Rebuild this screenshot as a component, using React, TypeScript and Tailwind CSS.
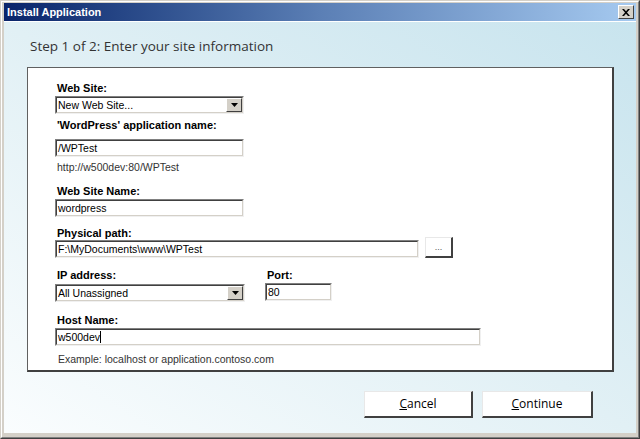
const ui = '"Liberation Sans", Arial, sans-serif';

function Sunken({ className, children }: { className: string; children?: React.ReactNode }) {
  return (
    <div className={`border border-t-[#808080] border-l-[#808080] border-r-[#f0f0f0] border-b-[#f0f0f0] ${className}`}>
      <div className="h-full flex items-center border border-t-[#404040] border-l-[#404040] border-r-[#d4d0c8] border-b-[#d4d0c8] bg-white">
        {children}
      </div>
    </div>
  );
}

function TextBox({ value, className, caret }: { value: string; className: string; caret?: boolean }) {
  return (
    <Sunken className={`h-[18px] ${className}`}>
      <span className="pl-[1px] text-[10.5px] leading-none text-black">{value}</span>
      {caret && <span className="w-px h-[12px] bg-black" />}
    </Sunken>
  );
}

function Combo({ value, className }: { value: string; className: string }) {
  return (
    <Sunken className={`h-[18px] ${className}`}>
      <span className="flex-1 pl-[1px] text-[10.5px] leading-none text-black">{value}</span>
      <div className="w-[16px] h-full flex items-center justify-center bg-[#d4d0c8] border border-t-white border-l-white border-r-[#404040] border-b-[#404040]">
        <svg width="7" height="4" viewBox="0 0 7 4">
          <path d="M0 0h7L3.5 4z" fill="#000" />
        </svg>
      </div>
    </Sunken>
  );
}

function Label({ text, className }: { text: string; className: string }) {
  return <div className={`ml-[2px] text-[11px] leading-[14px] font-bold text-black ${className}`}>{text}</div>;
}

function DlgButton({ label, className }: { label: string; className: string }) {
  return (
    <button
      className={`h-[27px] bg-white border border-t-[#e8e8e8] border-l-[#e8e8e8] border-r-2 border-b-2 border-r-[#404040] border-b-[#404040] text-[12px] text-black ${className}`}
      style={{ fontFamily: '"Open Sans", sans-serif' }}
    >
      <span className="underline">{label[0]}</span>
      {label.slice(1)}
    </button>
  );
}

export default function App() {
  return (
    <div className="w-[640px] h-[439px] bg-[#d4d0c8] border border-t-[#d4d0c8] border-l-[#d4d0c8] border-r-[#404040] border-b-[#404040]" style={{ fontFamily: ui }}>
      <div className="h-full flex flex-col border border-t-white border-l-white border-r-[#808080] border-b-[#808080] px-[2px] pt-[1px] pb-[4px]">
        <div className="h-[18px] flex items-center justify-between bg-linear-to-r from-[#0a246a] via-[#5b7fb5] to-[#a6caf0] pl-[3px] pr-[2px]">
          <span className="text-[11px] font-bold text-white">Install Application</span>
          <div className="w-[16px] h-[14px] flex items-center justify-center bg-[#d4d0c8] border border-t-white border-l-white border-r-[#404040] border-b-[#404040]">
            <svg width="8" height="7" viewBox="0 0 8 7">
              <path d="M0 0h2l2 2.3L6 0h2L5 3.5 8 7H6L4 4.7 2 7H0l3-3.5z" fill="#000" />
            </svg>
          </div>
        </div>
        <div className="flex-1 flex flex-col bg-linear-to-bl from-[#c8e4ee] via-[#e1f0f5] to-[#fafdfe] border-t border-[#ffffff]">
          <div
            className="ml-[26px] mt-[14px] text-[13.5px] leading-[20px] text-[#333]"
            style={{ fontFamily: '"Open Sans", sans-serif' }}
          >
            Step 1 of 2: Enter your site information
          </div>
          <div className="ml-[23px] mt-[11px] w-[587px] h-[305px] bg-white border border-[#606060] border-r-2 border-b-2 border-r-[#404040] border-b-[#404040] pl-[27px] pt-[13px] flex flex-col">
            <Label text="Web Site:" className="" />
            <Combo value="New Web Site..." className="mt-[1px] w-[189px]" />
            <Label text="'WordPress' application name:" className="mt-[4px]" />
            <TextBox value="/WPTest" className="mt-[7px] w-[189px]" />
            <div className="ml-[2px] mt-[3px] text-[10.5px] leading-[14px] text-[#333]">http://w500dev:80/WPTest</div>
            <Label text="Web Site Name:" className="mt-[10px]" />
            <TextBox value="wordpress" className="mt-[1px] w-[189px]" />
            <Label text="Physical path:" className="mt-[9px]" />
            <div className="flex items-start gap-[6px]">
              <TextBox value="F:\MyDocuments\www\WPTest" className="w-[364px]" />
              <button className="-mt-[3px] w-[28px] h-[21px] bg-white border border-t-[#e8e8e8] border-l-[#e8e8e8] border-r-2 border-b-2 border-r-[#404040] border-b-[#404040] text-[9px] leading-none text-[#555]">
                ...
              </button>
            </div>
            <div className="mt-[10px] flex">
              <div className="flex flex-col">
                <Label text="IP address:" className="" />
                <Combo value="All Unassigned" className="mt-[2px] w-[190px]" />
              </div>
              <div className="ml-[20px] flex flex-col">
                <Label text="Port:" className="" />
                <TextBox value="80" className="mt-[1px] w-[67px]" />
              </div>
            </div>
            <Label text="Host Name:" className="mt-[11px]" />
            <TextBox value="w500dev" className="mt-[1px] w-[426px]" caret />
            <div className="ml-[3px] mt-[6px] text-[10.5px] leading-[14px] text-[#333]">Example: localhost or application.contoso.com</div>
          </div>
          <div className="mt-[19px] mr-[43px] flex justify-end gap-[9px]">
            <DlgButton label="Cancel" className="w-[109px]" />
            <DlgButton label="Continue" className="w-[111px]" />
          </div>
        </div>
      </div>
    </div>
  );
}
